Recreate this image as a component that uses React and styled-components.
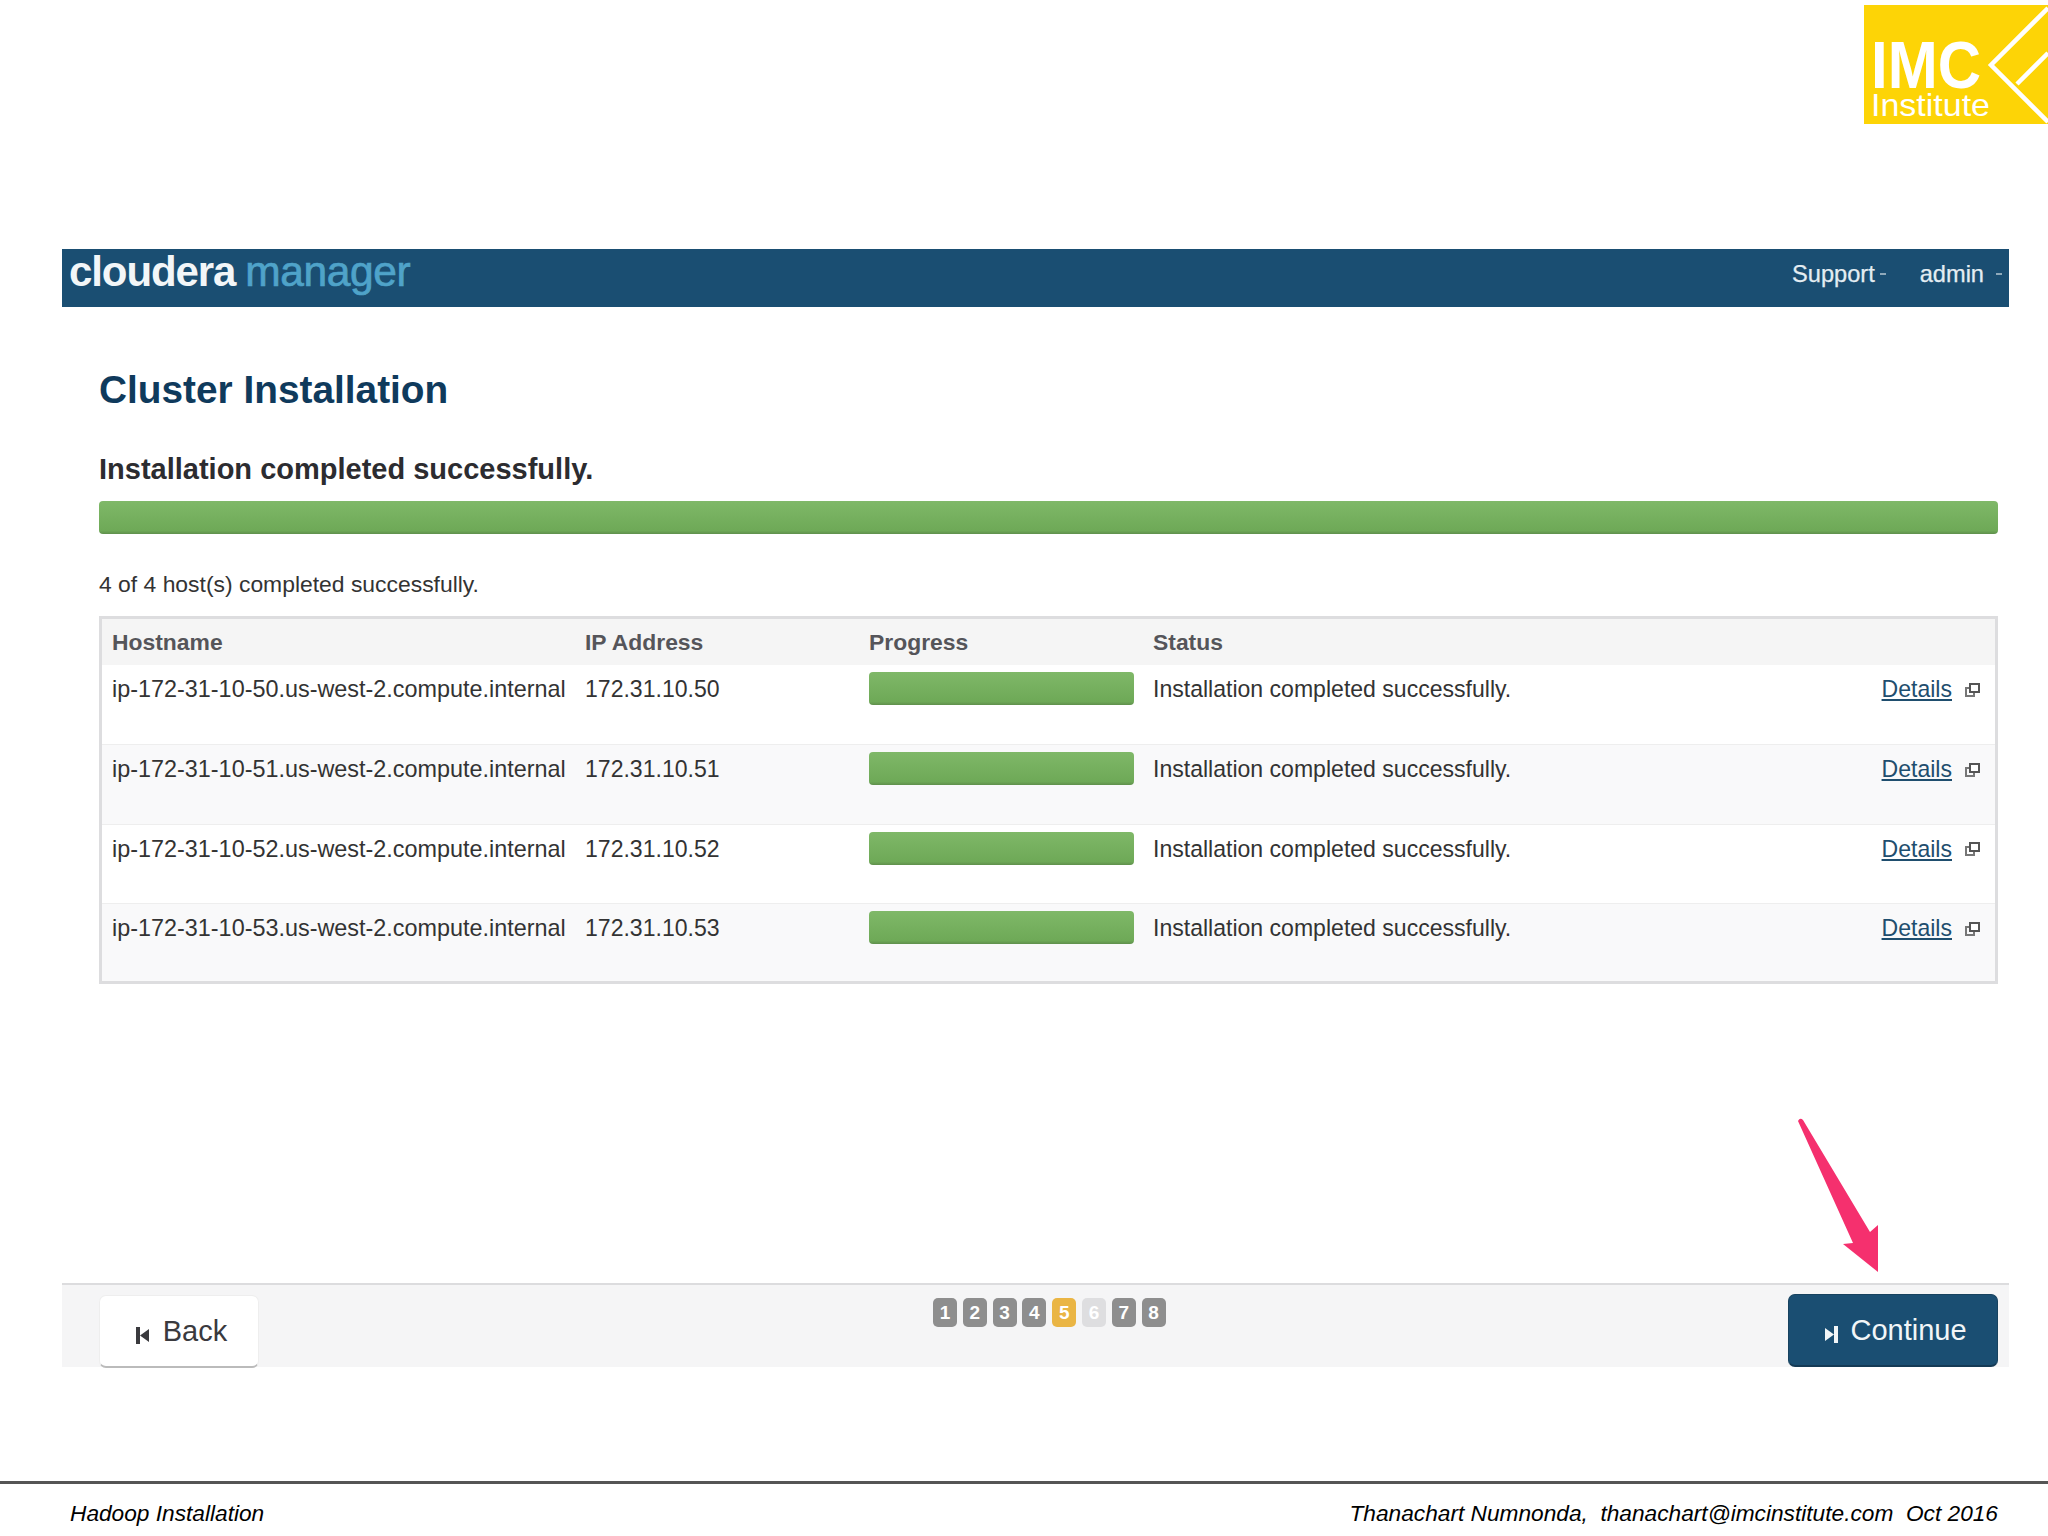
import React from "react";
import styled, { createGlobalStyle } from "styled-components";

const GlobalStyle = createGlobalStyle`
  html, body {
    margin: 0;
    padding: 0;
    background: #ffffff;
    font-family: "Liberation Sans", Arial, sans-serif;
    color: #333333;
  }
`;

const Page = styled.div`
  position: relative;
  width: 2048px;
  height: 1536px;
  overflow: hidden;
`;

const LogoRow = styled.div`
  display: flex;
  justify-content: flex-end;
  height: 249px;
  padding-top: 5px;
  box-sizing: border-box;
`;

const Shell = styled.div`
  margin: 0 39px 0 62px;
`;

const TopBar = styled.div`
  display: flex;
  align-items: center;
  height: 58px;
  padding: 0 7px 0 7px;
  background: #1a4e72;
`;

const Brand = styled.div`
  display: flex;
  align-items: baseline;
  gap: 10px;
  font-size: 42px;
  font-weight: 700;
  letter-spacing: -1.1px;
  margin-top: -12px;
  color: #f2f6f8;
`;

const BrandAccent = styled.span`
  color: #4fa3c9;
  font-weight: 400;
  font-size: 42.5px;
  letter-spacing: -0.4px;
  -webkit-text-stroke: 0.7px #4fa3c9;
`;

const TopLinks = styled.div`
  display: flex;
  margin-left: auto;
  gap: 34px;
  margin-top: -8px;
  font-size: 23.6px;
  color: #e4edf2;
  -webkit-text-stroke: 0.25px #e4edf2;
`;

const TopLink = styled.span`
  display: flex;
  align-items: center;
  gap: ${(p) => p.$gap}px;
`;

const Caret = styled.i`
  display: block;
  width: 6px;
  height: 2px;
  background: #8fa9ba;
`;

const Content = styled.div`
  padding: 0 11px 0 37px;
`;

const Title = styled.h1`
  margin: 60px 0 0;
  font-size: 38.8px;
  line-height: 46px;
  font-weight: 700;
  color: #0f3a5c;
`;

const Subtitle = styled.h2`
  margin: 38px 0 0;
  font-size: 29px;
  line-height: 36px;
  font-weight: 700;
  color: #2c2c30;
`;

const Bar = styled.div`
  height: ${(p) => p.$height}px;
  width: ${(p) => p.$width || "100%"};
  margin-top: ${(p) => p.$top || 0}px;
  border-radius: 4px;
  background: linear-gradient(#7fb868, #6ea957 90%, #5f8f4c);
`;

const Summary = styled.div`
  margin-top: 35px;
  font-size: 22.9px;
  line-height: 30px;
`;

const HostTable = styled.div`
  margin-top: 17px;
  height: 368px;
  box-sizing: border-box;
  border: 3px solid #dddddf;
`;

const Row = styled.div`
  display: grid;
  grid-template-columns: 473px 284px 284px 1fr auto;
  box-sizing: border-box;
  height: ${(p) => p.$height}px;
  padding: 8px 15px 0 10px;
  font-size: 23.06px;
  line-height: 33px;
  background: ${(p) => (p.$shade ? "#f9f9fa" : "#ffffff")};
  border-top: ${(p) => (p.$rule ? "1px solid #eeeeee" : "none")};
`;

const HeadRow = styled(Row)`
  padding-top: 7px;
  background: #f5f5f5;
  font-size: 22.9px;
  font-weight: 700;
  color: #55555a;
`;

const HostName = styled.div`
  font-size: 23.4px;
`;

const DetailsCell = styled.div`
  display: flex;
  align-items: center;
  height: 33px;
  gap: 13px;
`;

const DetailsLink = styled.a`
  color: #1f4e6e;
  text-decoration: underline;
`;

const BottomBar = styled.div`
  display: flex;
  box-sizing: border-box;
  height: 84px;
  margin-top: 299px;
  padding: 10px 11px 0 37px;
  background: #f5f5f6;
  border-top: 2px solid #dcdcde;
`;

const NavButton = styled.button`
  display: flex;
  align-items: center;
  justify-content: center;
  box-sizing: border-box;
  gap: ${(p) => p.$gap}px;
  width: ${(p) => p.$width}px;
  height: 73px;
  margin-top: ${(p) => p.$top || 0}px;
  font-family: inherit;
  font-size: ${(p) => p.$size}px;
  border-radius: 7px;
  padding: 0 0 0 ${(p) => p.$left}px;
  color: ${(p) => (p.$primary ? "#f2f6f8" : "#3a3a3e")};
  background: ${(p) => (p.$primary ? "#1a4e72" : "#ffffff")};
  border: 1px solid ${(p) => (p.$primary ? "#17425f" : "#eeeeee")};
  border-bottom: 2px solid ${(p) => (p.$primary ? "#143a55" : "#bbbbbb")};
  svg {
    margin-top: 8px;
  }
`;

const ContinueButton = styled(NavButton)`
  margin-left: auto;
`;

const Steps = styled.div`
  display: flex;
  gap: 5.8px;
  margin: 3px 0 0 674px;
`;

const Step = styled.span`
  width: 24px;
  height: 29px;
  border-radius: 5px;
  text-align: center;
  font-size: 19px;
  line-height: 29px;
  font-weight: 700;
  color: #ffffff;
  background: ${(p) =>
    p.$state === "active" ? "#eab544" : p.$state === "off" ? "#dedee0" : "#8e8e8e"};
`;

const Footer = styled.div`
  display: flex;
  justify-content: space-between;
  margin-top: 114px;
  padding: 14px 50px 0 70px;
  border-top: 3px solid #555555;
  font-size: 22.7px;
  line-height: 30px;
  font-style: italic;
  color: #000000;
`;

const Arrow = styled.svg`
  position: absolute;
  left: 1790px;
  top: 1110px;
`;

const hosts = [
  ["ip-172-31-10-50.us-west-2.compute.internal", "172.31.10.50"],
  ["ip-172-31-10-51.us-west-2.compute.internal", "172.31.10.51"],
  ["ip-172-31-10-52.us-west-2.compute.internal", "172.31.10.52"],
  ["ip-172-31-10-53.us-west-2.compute.internal", "172.31.10.53"],
];

const steps = [1, 2, 3, 4, 5, 6, 7, 8];

function Logo() {
  return (
    <svg width="184" height="119" viewBox="0 0 184 119">
      <rect width="184" height="119" fill="#fdd406" />
      <text
        x="7"
        y="83"
        fontFamily="Liberation Sans"
        fontSize="67"
        fontWeight="700"
        fill="#ffffff"
        textLength="110"
        lengthAdjust="spacingAndGlyphs"
      >
        IMC
      </text>
      <text
        x="7"
        y="111"
        fontFamily="Liberation Sans"
        fontSize="32"
        fill="#ffffff"
        textLength="119"
        lengthAdjust="spacingAndGlyphs"
      >
        Institute
      </text>
      <path d="M184 3 L127 60 L184 117 M153 79 L184 48" fill="none" stroke="#ffffff" strokeWidth="4.5" />
    </svg>
  );
}

function WindowIcon() {
  return (
    <svg width="15" height="14" viewBox="0 0 15 14">
      <rect x="5" y="1" width="9" height="8" fill="#ffffff" stroke="#555555" strokeWidth="2" />
      <path d="M4 5 H1 V13 H9 V10" fill="none" stroke="#777777" strokeWidth="2" />
    </svg>
  );
}

function SkipIcon({ flip, color }) {
  return (
    <svg width="13" height="17" viewBox="0 0 13 17">
      <path
        d={flip ? "M0 2 L9 8.5 L0 15 Z M9 0 H13 V17 H9 Z" : "M13 2 L4 8.5 L13 15 Z M0 0 H4 V17 H0 Z"}
        fill={color}
      />
    </svg>
  );
}

export default function App() {
  return (
    <Page>
      <GlobalStyle />
      <LogoRow>
        <Logo />
      </LogoRow>
      <Shell>
        <TopBar>
          <Brand>
            cloudera
            <BrandAccent>manager</BrandAccent>
          </Brand>
          <TopLinks>
            <TopLink $gap={5}>
              Support
              <Caret />
            </TopLink>
            <TopLink $gap={12}>
              admin
              <Caret />
            </TopLink>
          </TopLinks>
        </TopBar>
        <Content>
          <Title>Cluster Installation</Title>
          <Subtitle>Installation completed successfully.</Subtitle>
          <Bar $height={33} $top={14} />
          <Summary>4 of 4 host(s) completed successfully.</Summary>
          <HostTable>
            <HeadRow $height={46}>
              <div>Hostname</div>
              <div>IP Address</div>
              <div>Progress</div>
              <div>Status</div>
            </HeadRow>
            {hosts.map(([name, ip], i) => (
              <Row key={name} $height={i === 3 ? 77.8 : 79.4} $shade={i % 2 === 1} $rule={i > 0}>
                <HostName>{name}</HostName>
                <div>{ip}</div>
                <Bar $height={33} $width="265px" $top={-1} />
                <div>Installation completed successfully.</div>
                <DetailsCell>
                  <DetailsLink href="#">Details</DetailsLink>
                  <WindowIcon />
                </DetailsCell>
              </Row>
            ))}
          </HostTable>
        </Content>
        <BottomBar>
          <NavButton $width={160} $gap={14} $size={29} $left={5}>
            <SkipIcon color="#3a3a3e" />
            Back
          </NavButton>
          <Steps>
            {steps.map((n) => (
              <Step key={n} $state={n === 5 ? "active" : n === 6 ? "off" : "done"}>
                {n}
              </Step>
            ))}
          </Steps>
          <ContinueButton $width={210} $gap={12} $size={29} $left={6} $primary $top={-1}>
            <SkipIcon flip color="#f2f6f8" />
            Continue
          </ContinueButton>
        </BottomBar>
      </Shell>
      <Footer>
        <span>Hadoop Installation</span>
        <span>Thanachart Numnonda,&nbsp; thanachart@imcinstitute.com&nbsp; Oct 2016</span>
      </Footer>
      <Arrow width="100" height="170" viewBox="0 0 100 170">
        <path d="M8 11 Q10 7 13 10 L80 122 L88 115 L88 162 L53 134 L63 133 Z" fill="#f5306e" />
      </Arrow>
    </Page>
  );
}
